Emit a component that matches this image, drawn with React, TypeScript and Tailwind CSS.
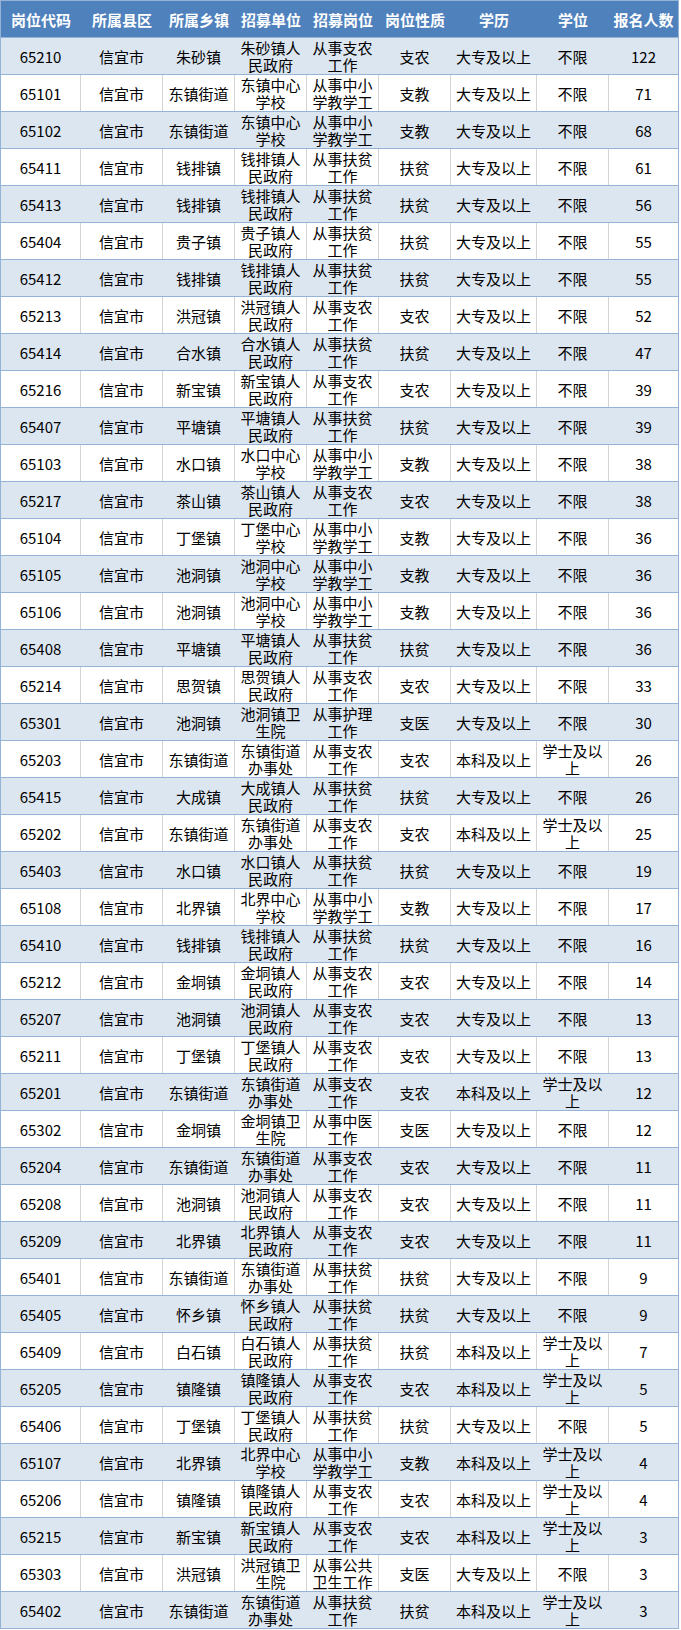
const headers = ["岗位代码", "所属县区", "所属乡镇", "招募单位", "招募岗位", "岗位性质", "学历", "学位", "报名人数"];

type Row = [string, string, string, string, string, string, string, string];

// code, town, unit, post, type, education, degree, applicants
const rows: Row[] = [
  ["65210", "朱砂镇", "朱砂镇人民政府", "从事支农工作", "支农", "大专及以上", "不限", "122"],
  ["65101", "东镇街道", "东镇中心学校", "从事中小学教学工", "支教", "大专及以上", "不限", "71"],
  ["65102", "东镇街道", "东镇中心学校", "从事中小学教学工", "支教", "大专及以上", "不限", "68"],
  ["65411", "钱排镇", "钱排镇人民政府", "从事扶贫工作", "扶贫", "大专及以上", "不限", "61"],
  ["65413", "钱排镇", "钱排镇人民政府", "从事扶贫工作", "扶贫", "大专及以上", "不限", "56"],
  ["65404", "贵子镇", "贵子镇人民政府", "从事扶贫工作", "扶贫", "大专及以上", "不限", "55"],
  ["65412", "钱排镇", "钱排镇人民政府", "从事扶贫工作", "扶贫", "大专及以上", "不限", "55"],
  ["65213", "洪冠镇", "洪冠镇人民政府", "从事支农工作", "支农", "大专及以上", "不限", "52"],
  ["65414", "合水镇", "合水镇人民政府", "从事扶贫工作", "扶贫", "大专及以上", "不限", "47"],
  ["65216", "新宝镇", "新宝镇人民政府", "从事支农工作", "支农", "大专及以上", "不限", "39"],
  ["65407", "平塘镇", "平塘镇人民政府", "从事扶贫工作", "扶贫", "大专及以上", "不限", "39"],
  ["65103", "水口镇", "水口中心学校", "从事中小学教学工", "支教", "大专及以上", "不限", "38"],
  ["65217", "茶山镇", "茶山镇人民政府", "从事支农工作", "支农", "大专及以上", "不限", "38"],
  ["65104", "丁堡镇", "丁堡中心学校", "从事中小学教学工", "支教", "大专及以上", "不限", "36"],
  ["65105", "池洞镇", "池洞中心学校", "从事中小学教学工", "支教", "大专及以上", "不限", "36"],
  ["65106", "池洞镇", "池洞中心学校", "从事中小学教学工", "支教", "大专及以上", "不限", "36"],
  ["65408", "平塘镇", "平塘镇人民政府", "从事扶贫工作", "扶贫", "大专及以上", "不限", "36"],
  ["65214", "思贺镇", "思贺镇人民政府", "从事支农工作", "支农", "大专及以上", "不限", "33"],
  ["65301", "池洞镇", "池洞镇卫生院", "从事护理工作", "支医", "大专及以上", "不限", "30"],
  ["65203", "东镇街道", "东镇街道办事处", "从事支农工作", "支农", "本科及以上", "学士及以上", "26"],
  ["65415", "大成镇", "大成镇人民政府", "从事扶贫工作", "扶贫", "大专及以上", "不限", "26"],
  ["65202", "东镇街道", "东镇街道办事处", "从事支农工作", "支农", "本科及以上", "学士及以上", "25"],
  ["65403", "水口镇", "水口镇人民政府", "从事扶贫工作", "扶贫", "大专及以上", "不限", "19"],
  ["65108", "北界镇", "北界中心学校", "从事中小学教学工", "支教", "大专及以上", "不限", "17"],
  ["65410", "钱排镇", "钱排镇人民政府", "从事扶贫工作", "扶贫", "大专及以上", "不限", "16"],
  ["65212", "金垌镇", "金垌镇人民政府", "从事支农工作", "支农", "大专及以上", "不限", "14"],
  ["65207", "池洞镇", "池洞镇人民政府", "从事支农工作", "支农", "大专及以上", "不限", "13"],
  ["65211", "丁堡镇", "丁堡镇人民政府", "从事支农工作", "支农", "大专及以上", "不限", "13"],
  ["65201", "东镇街道", "东镇街道办事处", "从事支农工作", "支农", "本科及以上", "学士及以上", "12"],
  ["65302", "金垌镇", "金垌镇卫生院", "从事中医工作", "支医", "大专及以上", "不限", "12"],
  ["65204", "东镇街道", "东镇街道办事处", "从事支农工作", "支农", "大专及以上", "不限", "11"],
  ["65208", "池洞镇", "池洞镇人民政府", "从事支农工作", "支农", "大专及以上", "不限", "11"],
  ["65209", "北界镇", "北界镇人民政府", "从事支农工作", "支农", "大专及以上", "不限", "11"],
  ["65401", "东镇街道", "东镇街道办事处", "从事扶贫工作", "扶贫", "大专及以上", "不限", "9"],
  ["65405", "怀乡镇", "怀乡镇人民政府", "从事扶贫工作", "扶贫", "大专及以上", "不限", "9"],
  ["65409", "白石镇", "白石镇人民政府", "从事扶贫工作", "扶贫", "本科及以上", "学士及以上", "7"],
  ["65205", "镇隆镇", "镇隆镇人民政府", "从事支农工作", "支农", "本科及以上", "学士及以上", "5"],
  ["65406", "丁堡镇", "丁堡镇人民政府", "从事扶贫工作", "扶贫", "大专及以上", "不限", "5"],
  ["65107", "北界镇", "北界中心学校", "从事中小学教学工", "支教", "本科及以上", "学士及以上", "4"],
  ["65206", "镇隆镇", "镇隆镇人民政府", "从事支农工作", "支农", "本科及以上", "学士及以上", "4"],
  ["65215", "新宝镇", "新宝镇人民政府", "从事支农工作", "支农", "本科及以上", "学士及以上", "3"],
  ["65303", "洪冠镇", "洪冠镇卫生院", "从事公共卫生工作", "支医", "大专及以上", "不限", "3"],
  ["65402", "东镇街道", "东镇街道办事处", "从事扶贫工作", "扶贫", "本科及以上", "学士及以上", "3"],
];

const cols = "grid grid-cols-[80px_82px_72px_72px_72px_72px_86px_72px_69px]";

export default function App() {
  return (
    <div className="min-h-[1630px] w-[681px] bg-white font-['Noto_Sans_CJK_SC',sans-serif] text-[15px] leading-[17px] text-black">
      <div className="w-[679px] border-x border-[#95b3d7]">
        {/* header */}
        <div className={`${cols} h-[38px] border-y border-[#95b3d7] bg-[#4f81bd] font-bold text-white`}>
          {headers.map((h) => (
            <div key={h} className="flex items-center justify-center whitespace-nowrap">
              {h}
            </div>
          ))}
        </div>

        {rows.map((r, i) => (
          <TableRow key={r[0]} row={r} shaded={i % 2 === 0} />
        ))}
      </div>
    </div>
  );
}

function TableRow({ row, shaded }: { row: Row; shaded: boolean }) {
  const [code, town, unit, post, kind, edu, degree, count] = row;
  const cells = [code, "信宜市", town, unit, post, kind, edu, degree, count];
  return (
    <div
      className={`${cols} h-[37px] border-b border-[#95b3d7] ${shaded ? "bg-[#dce6f1]" : "bg-white"}`}
    >
      {cells.map((c, j) => (
        <div
          key={j}
          className={`flex items-center justify-center overflow-hidden text-center ${
            j < 8 ? (shaded ? "border-r border-[#dce6f1]" : "border-r border-[#d4d4d4]") : ""
          }`}
        >
          <span className="max-h-[36px]">{c}</span>
        </div>
      ))}
    </div>
  );
}
